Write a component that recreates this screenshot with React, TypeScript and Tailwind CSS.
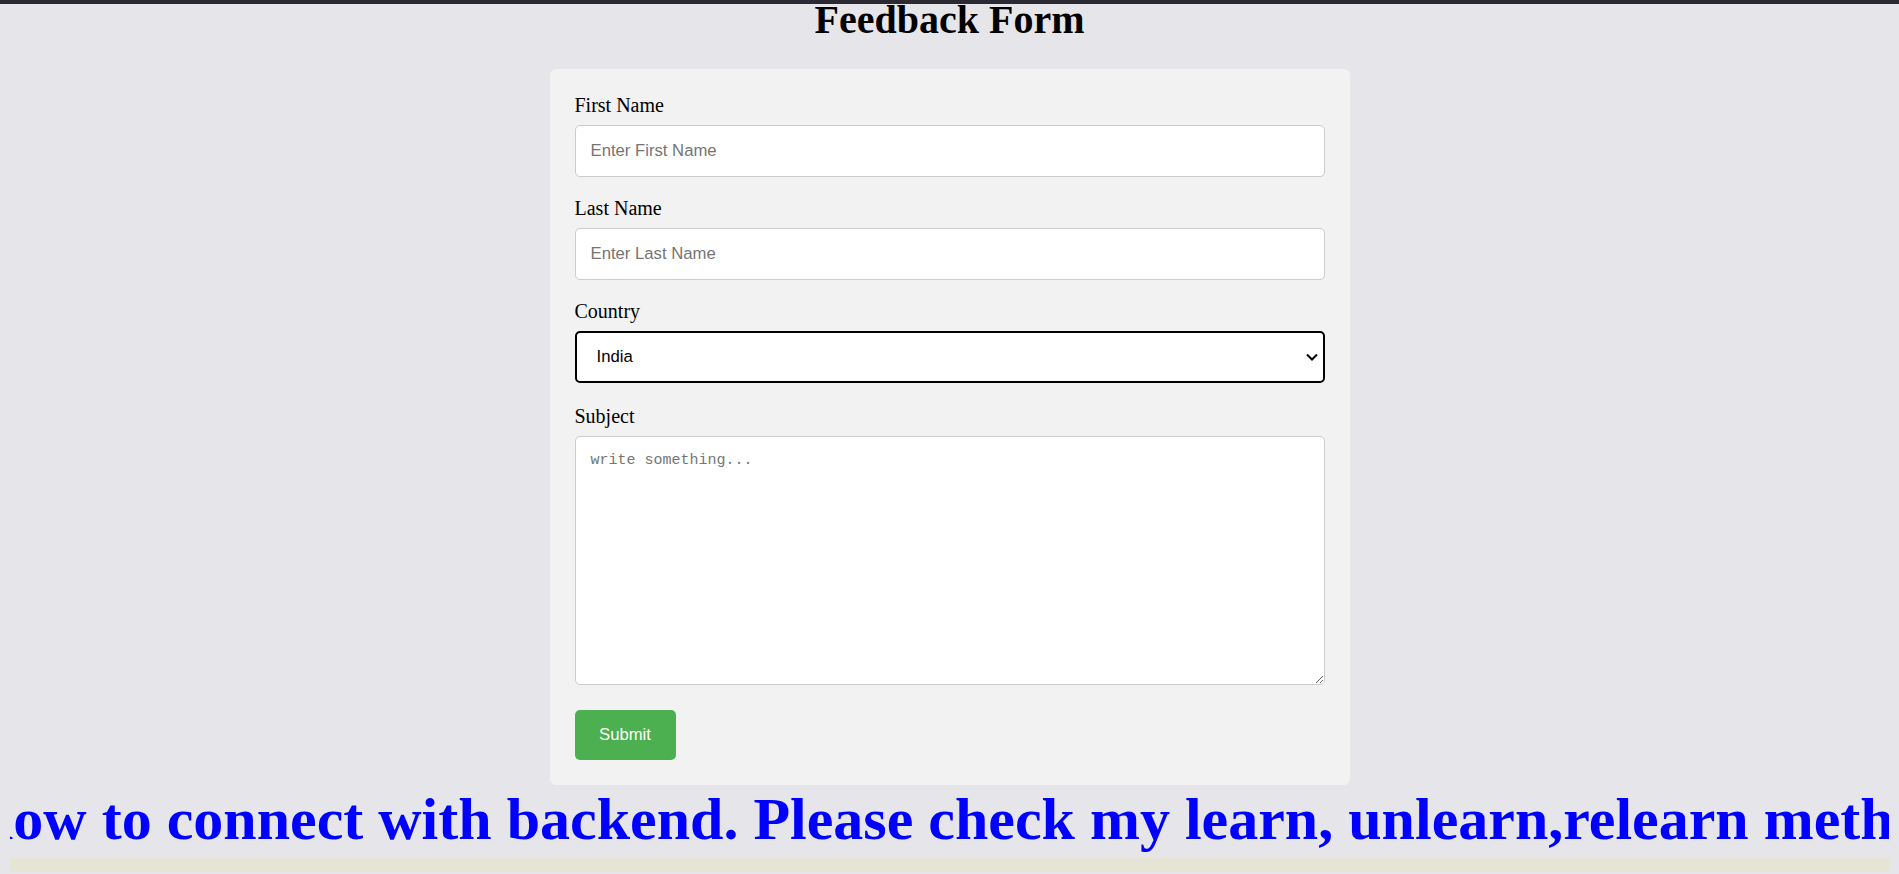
import { useState } from "react";

const inputClass =
  "mt-[8px] mb-[20px] block h-[52px] w-full rounded-[5px] border border-[#ccc] bg-white px-[15px] font-['Liberation_Sans',Arial,sans-serif] text-[16.7px] text-black outline-none placeholder:text-[#757575]";

const labelClass = "block text-[20px] leading-[23px] text-black";

export default function App() {
  const [country, setCountry] = useState("india");

  return (
    <div className="min-h-screen bg-[#e5e5ea] font-['Liberation_Serif','Times_New_Roman',serif]">
      <div className="h-[4px] bg-[#2b2a33]" />
      <h1 className="text-center text-[40px] font-bold leading-[31px] text-black">
        Feedback Form
      </h1>

      <div className="mx-auto mt-[34px] w-[800px] rounded-[6px] bg-[#f2f2f2] p-[25px]">
        <form onSubmit={(e) => e.preventDefault()}>
          <label htmlFor="fname" className={labelClass}>
            First Name
          </label>
          <input
            type="text"
            id="fname"
            name="firstname"
            placeholder="Enter First Name"
            className={inputClass}
          />

          <label htmlFor="lname" className={labelClass}>
            Last Name
          </label>
          <input
            type="text"
            id="lname"
            name="lastname"
            placeholder="Enter Last Name"
            className={inputClass}
          />

          <label htmlFor="country" className={labelClass}>
            Country
          </label>
          <div className="relative mt-[8px] mb-[22px]">
            <select
              id="country"
              name="country"
              value={country}
              onChange={(e) => setCountry(e.target.value)}
              className="block h-[52px] w-full appearance-none rounded-[5px] border-2 border-black bg-white pl-[20px] font-['Liberation_Sans',Arial,sans-serif] text-[16.7px] text-black outline-none"
            >
              <option value="india">India</option>
              <option value="usa">USA</option>
              <option value="canada">Canada</option>
            </select>
            <svg
              className="pointer-events-none absolute right-[7px] top-[22px]"
              width="12"
              height="8"
              viewBox="0 0 12 8"
              fill="none"
            >
              <path d="M1 1.5l5 5 5-5" stroke="#000" strokeWidth="2" />
            </svg>
          </div>

          <label htmlFor="subject" className={labelClass}>
            Subject
          </label>
          <textarea
            id="subject"
            name="subject"
            placeholder="write something..."
            className="mt-[8px] mb-[25px] block h-[249px] w-full resize-y rounded-[5px] border border-[#ccc] bg-white px-[15px] py-[15px] font-['Liberation_Mono',monospace] text-[15px] leading-[18px] text-black outline-none placeholder:text-[#757575]"
          />

          <button
            type="submit"
            className="block h-[50px] w-[101px] rounded-[5px] bg-[#4caf50] font-['Liberation_Sans',Arial,sans-serif] text-[16.7px] text-white"
          >
            Submit
          </button>
        </form>
      </div>

      <div className="mx-[10px] overflow-hidden">
        <div className="-ml-[30px] whitespace-nowrap text-[60px] font-bold leading-[69px] text-[#0000ff]">
          how to connect with backend. Please check my learn, unlearn,relearn method
        </div>
      </div>
      <div className="mx-[10px] mt-[4px] h-[14px] bg-[#e6e5d5]" />
    </div>
  );
}
